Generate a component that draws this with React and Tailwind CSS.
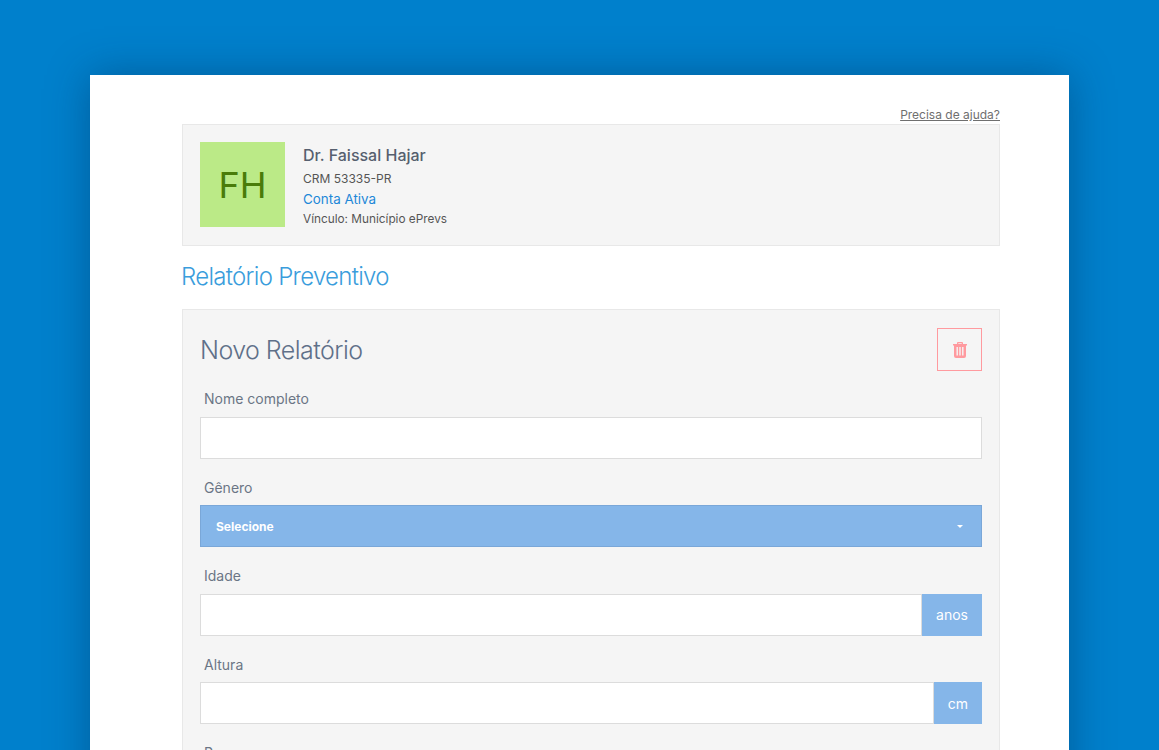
import React from 'react';

const Field = ({ label, children }) => (
  <div className="mb-[20px]">
    <label className="block h-[26.5px] pl-1 text-[14px] leading-[18px] text-[#6b7585]">{label}</label>
    {children}
  </div>
);

const TextInput = () => (
  <input type="text" className="block h-[42px] w-full min-w-0 border border-[#dcdcdc] bg-white" />
);

const Addon = ({ label, width }) => (
  <div className="flex">
    <input type="text" className="block h-[42px] min-w-0 flex-1 border border-[#dcdcdc] bg-white" />
    <span className={`flex h-[42px] items-center justify-center bg-[#85b6e9] text-[14px] text-white ${width}`}>{label}</span>
  </div>
);

function App() {
  return (
    <div className="h-[750px] overflow-hidden bg-[#0080cc] px-[90px] pt-[75px] font-['Inter',sans-serif]">
      <div className="h-[800px] bg-white pt-[32px] pr-[69px] pl-[92px] shadow-[0_0_40px_rgba(0,40,80,0.4)]">
        <div className="flex h-[17px] justify-end">
          <a href="#" className="text-[12px] leading-[16px] text-[#6f6f6f] underline">Precisa de ajuda?</a>
        </div>

        <div className="flex h-[122px] items-start border border-[#e8e8e8] bg-[#f5f5f5] px-[17px] pt-[17px]">
          <div className="flex h-[85px] w-[85px] items-center justify-center bg-[#bbea87] text-[36px] text-[#4a7c0a]">FH</div>
          <div className="ml-[18px]">
            <div className="text-[16px] leading-[26px] font-medium text-[#565f6e]">Dr. Faissal Hajar</div>
            <div className="mt-[2px] text-[12px] leading-[18px] text-[#555]">CRM 53335-PR</div>
            <div className="text-[13.4px] leading-[23px] text-[#1e88d8]">Conta Ativa</div>
            <div className="mt-[1px] text-[11.8px] leading-[15px] text-[#555]">Vínculo: Município ePrevs</div>
          </div>
        </div>

        <h1 className="mt-[15px] h-[48px] -translate-x-px text-[24px] leading-[32px] font-light tracking-[-0.7px] text-[#3a9ddc]">Relatório Preventivo</h1>

        <div className="border border-[#e8e8e8] bg-[#f5f5f5] px-[17px] pt-[18px]">
          <div className="mb-[19px] flex h-[43px] items-center justify-between">
            <h2 className="pt-[2px] text-[25px] leading-[43px] font-light tracking-[-0.55px] text-[#5f7089]">Novo Relatório</h2>
            <button className="flex h-[43px] w-[45px] items-center justify-center border border-[#ff9a9f] text-[#ff9a9f]">
              <svg width="14" height="16" viewBox="0 0 14 16" fill="currentColor">
                <path fillRule="evenodd" d="M5 0h4a1 1 0 0 1 1 1v1h4v1.4h-1V14a2 2 0 0 1-2 2H3a2 2 0 0 1-2-2V3.4H0V2h4V1a1 1 0 0 1 1-1Zm.3 1.3V2h3.4v-.7ZM3.5 5v8.5h1.4V5Zm2.8 0v8.5h1.4V5Zm2.8 0v8.5h1.4V5Z" />
              </svg>
            </button>
          </div>

          <Field label="Nome completo"><TextInput /></Field>

          <Field label="Gênero">
            <div className="flex h-[42px] items-center justify-between border border-[#7aa7d8] bg-[#85b6e9] pt-[1px] pr-[18px] pl-[15px] text-[12px] font-bold text-white">
              Selecione
              <span className="h-0 w-0 border-x-[3.5px] border-t-[3.5px] border-x-transparent border-t-white" />
            </div>
          </Field>

          <Field label="Idade"><Addon label="anos" width="w-[60px]" /></Field>
          <Field label="Altura"><Addon label="cm" width="w-[48px]" /></Field>
          <Field label="Peso"><Addon label="kg" width="w-[48px]" /></Field>
        </div>
      </div>
    </div>
  );
}

export default App;
